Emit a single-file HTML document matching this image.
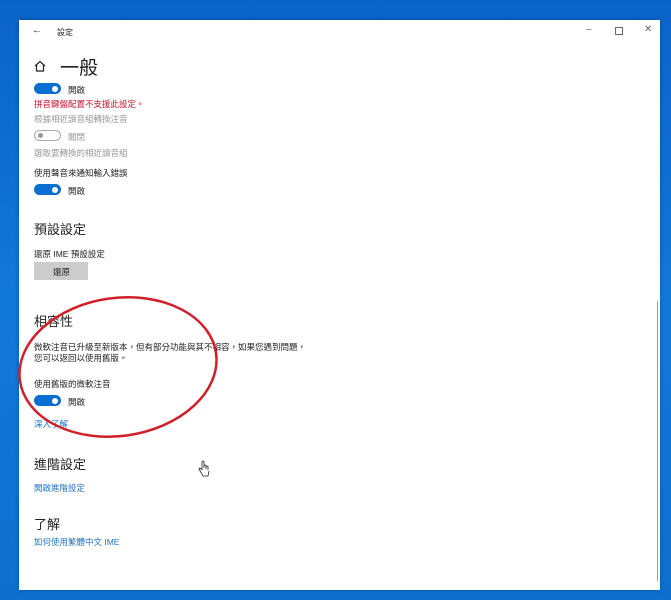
<!DOCTYPE html>
<html><head><meta charset="utf-8"><style>
body{margin:0;width:671px;height:600px;overflow:hidden;background:linear-gradient(180deg,#0a63c9 0%,#1278d8 50%,#0f6fcf 100%);font-family:"Liberation Sans","Noto Sans CJK TC",sans-serif;position:relative}
.win{position:absolute;left:19px;top:20px;width:641px;height:570px;background:#fff;box-shadow:0 0 4px rgba(0,0,0,.3)}
.t{position:absolute;white-space:nowrap;color:#222}
.s{font-size:8.5px}
.h{font-size:13px;color:#222}
.tg{position:absolute;width:27px;height:11px;border-radius:6px;background:#0a6fd0}
.tg:after{content:"";position:absolute;right:3px;top:2.5px;width:6px;height:6px;border-radius:50%;background:#fff}
.off{background:#fff;border:1px solid #aaa;width:25px;height:9px}
.off:after{left:3px;right:auto;top:2px;background:#999;width:5px;height:5px}
.lk{color:#1f73c8}
</style></head><body>
<div class="win">
<div class="t s" style="left:13px;top:5px;font-size:10px">←</div>
<div class="t s" style="left:38px;top:7px;font-size:8px">設定</div>
<div class="t" style="left:567px;top:4px;font-size:10px;color:#666">–</div>
<div style="position:absolute;left:596px;top:7px;width:6px;height:6px;border:1px solid #666"></div>
<div class="t" style="left:625px;top:4px;font-size:10px;color:#666">✕</div>
<svg style="position:absolute;left:14px;top:40px" width="14" height="12"><path d="M2 6 L7 1.5 L12 6 M3.5 5 V11 H10.5 V5" fill="none" stroke="#222" stroke-width="1.2"/></svg>
<div class="t" style="left:41px;top:33px;font-size:19px">一般</div>
<div class="tg" style="left:15px;top:63px"></div><div class="t s" style="left:49px;top:64px">開啟</div>
<div class="t s" style="left:15px;top:78px;color:#c8102e">拼音鍵盤配置不支援此設定。</div>
<div class="t s" style="left:15px;top:93px;color:#999">根據相近讀音組轉換注音</div>
<div class="tg off" style="left:15px;top:110px"></div><div class="t s" style="left:49px;top:111px;color:#999">關閉</div>
<div class="t s" style="left:15px;top:127px;color:#999">選取要轉換的相近讀音組</div>
<div class="t s" style="left:15px;top:147px">使用聲音來通知輸入錯誤</div>
<div class="tg" style="left:15px;top:164px"></div><div class="t s" style="left:49px;top:165px">開啟</div>
<div class="t h" style="left:15px;top:199px">預設設定</div>
<div class="t s" style="left:15px;top:228px">還原 IME 預設設定</div>
<div style="position:absolute;left:15px;top:242px;width:54px;height:18px;background:#ccc"></div>
<div class="t s" style="left:34px;top:246px">還原</div>
<div class="t h" style="left:15px;top:291px">相容性</div>
<div class="t s" style="left:15px;top:321px">微軟注音已升級至新版本，但有部分功能與其不相容，如果您遇到問題，</div>
<div class="t s" style="left:15px;top:332px">您可以返回以使用舊版。</div>
<div class="t s" style="left:15px;top:358px">使用舊版的微軟注音</div>
<div class="tg" style="left:15px;top:375px"></div><div class="t s" style="left:49px;top:376px">開啟</div>
<div class="t s lk" style="left:15px;top:398px">深入了解</div>
<div class="t h" style="left:15px;top:434px">進階設定</div>
<div class="t s lk" style="left:15px;top:462px">開啟進階設定</div>
<div class="t h" style="left:15px;top:494px">了解</div>
<div class="t s lk" style="left:15px;top:516px">如何使用繁體中文 IME</div>
<div style="position:absolute;left:638px;top:281px;width:1px;height:280px;background:#999"></div>
</div>
<svg style="position:absolute;left:0;top:0" width="671" height="600"><ellipse cx="118" cy="367" rx="99" ry="69" transform="rotate(-8 118 367)" fill="none" stroke="#d0202a" stroke-width="2.5"/>
<path d="M202 470 V462 a1 1 0 0 1 2 0 V468 M204 466 a1 1 0 0 1 2 0 V469 M206 467 a1 1 0 0 1 2 0 V470 M202 470 L200 468 a1 1 0 0 0 -1 1 L203 476 H208 L209 471" fill="#fff" stroke="#222" stroke-width=".8"/></svg>
</body></html>
